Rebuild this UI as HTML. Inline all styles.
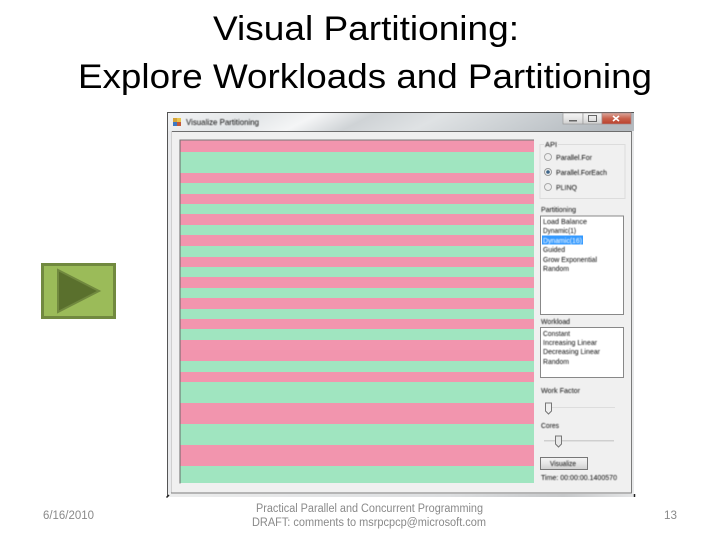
<!DOCTYPE html>
<html lang="en">
<head>
<meta charset="utf-8">
<title>Visual Partitioning</title>
<style>
html,body{margin:0;padding:0;background:#fff;width:720px;height:540px;overflow:hidden}
svg{display:block}
text{font-family:"Liberation Sans",sans-serif}
</style>
</head>
<body>
<svg width="720" height="540" viewBox="0 0 720 540" xmlns="http://www.w3.org/2000/svg">
<defs>
<linearGradient id="tb" x1="0" y1="0" x2="1" y2="0.08">
<stop offset="0" stop-color="#f3f4f5"/><stop offset=".2" stop-color="#e2e5e7"/><stop offset=".33" stop-color="#f4f5f6"/><stop offset=".45" stop-color="#cfd3d6"/><stop offset=".6" stop-color="#dfe2e4"/><stop offset=".85" stop-color="#c4c9cd"/><stop offset="1" stop-color="#b4babf"/>
</linearGradient>
<linearGradient id="btn" x1="0" y1="0" x2="0" y2="1">
<stop offset="0" stop-color="#f5f5f5"/><stop offset=".5" stop-color="#e6e6e6"/><stop offset="1" stop-color="#cfcfcf"/>
</linearGradient>
<linearGradient id="cls" x1="0" y1="0" x2="0" y2="1">
<stop offset="0" stop-color="#dba79c"/><stop offset=".5" stop-color="#c9614c"/><stop offset="1" stop-color="#b9402c"/>
</linearGradient>
<linearGradient id="bot" x1="0" y1="0" x2="1" y2="0">
<stop offset="0" stop-color="#eceded"/><stop offset=".6" stop-color="#dcdee0"/><stop offset=".85" stop-color="#c6c8ca"/><stop offset="1" stop-color="#e4e5e6"/>
</linearGradient>
<filter id="soft" x="-5%" y="-5%" width="110%" height="110%"><feGaussianBlur stdDeviation="0.45"/></filter>
</defs>
<rect width="720" height="540" fill="#fff"/>

<text x="213" y="40" font-size="34.5" fill="#000" textLength="306" lengthAdjust="spacingAndGlyphs">Visual Partitioning:</text>
<text x="78" y="88" font-size="34.5" fill="#000" textLength="574" lengthAdjust="spacingAndGlyphs">Explore Workloads and Partitioning</text>

<!-- play button -->
<rect x="42.5" y="264.5" width="72" height="53" fill="#9bbb59" stroke="#71893f" stroke-width="3"/>
<polygon points="58,270 99,291 58,312" fill="#5a702d" stroke="#71893f" stroke-width="2"/>

<!-- window -->
<rect x="167" y="112" width="467" height="385" fill="#f0f0f0"/>
<rect x="167" y="112" width="467" height="19" fill="url(#tb)"/>
<rect x="168" y="494" width="466" height="3" fill="url(#bot)"/>
<rect x="168" y="131" width="3" height="362" fill="#e9eaec"/>
<rect x="632" y="131" width="2" height="362" fill="#e8e9ea"/>
<rect x="167" y="112" width="1" height="385" fill="#555"/>
<rect x="167" y="112" width="467" height="1" fill="#555"/>
<rect x="171" y="131" width="461" height="1" fill="#6d6d6d"/>
<rect x="171" y="131" width="1" height="362" fill="#cfcfcf"/>
<rect x="171" y="492.5" width="461" height="1" fill="#7a7a7a"/>
<rect x="631" y="131" width="1" height="362" fill="#7a7a7a"/>
<path d="M166.5 497.5l2.5-2.5M634.5 497v-3" stroke="#222" stroke-width="1.5" fill="none"/>

<!-- title icon and text -->
<rect x="173" y="118" width="4" height="4" fill="#d6a33a"/>
<rect x="177" y="118" width="4" height="4" fill="#e8c64d"/>
<rect x="173" y="122" width="4" height="4" fill="#3b78c4"/>
<rect x="177" y="122" width="4" height="4" fill="#c25a3a"/>

<!-- window controls -->
<rect x="563" y="113" width="20" height="11" fill="url(#btn)" stroke="#999" stroke-width=".7"/>
<rect x="583" y="113" width="19" height="11" fill="url(#btn)" stroke="#999" stroke-width=".7"/>
<rect x="602" y="113" width="29" height="11" fill="url(#cls)" stroke="#a88" stroke-width=".7"/>
<rect x="569" y="120" width="8" height="1.5" fill="#666"/>
<rect x="588.5" y="115.5" width="8" height="6" fill="none" stroke="#666"/>
<path d="M613 116l6 5M619 116l-6 5" stroke="#fff" stroke-width="1.6" fill="none"/>

<!-- chart -->
<rect x="180" y="140" width="354" height="343" fill="#a0e5c0"/>
<g fill="#f295ae">
<rect x="180" y="140" width="354" height="12"/>
<rect x="180" y="173" width="354" height="10"/>
<rect x="180" y="194" width="354" height="10"/>
<rect x="180" y="214" width="354" height="11"/>
<rect x="180" y="235" width="354" height="11"/>
<rect x="180" y="257" width="354" height="10"/>
<rect x="180" y="277" width="354" height="11"/>
<rect x="180" y="298" width="354" height="11"/>
<rect x="180" y="319" width="354" height="10"/>
<rect x="180" y="340" width="354" height="21"/>
<rect x="180" y="372" width="354" height="10"/>
<rect x="180" y="403" width="354" height="21"/>
<rect x="180" y="445" width="354" height="21"/>
</g>
<rect x="179.5" y="139.5" width="1" height="344" fill="#666"/>
<rect x="180" y="139.5" width="354" height="1" fill="#777"/>

<!-- API group -->
<rect x="540" y="144.5" width="85" height="54" fill="#f0f0f0" stroke="#dcdcdc"/>
<rect x="544" y="140" width="14" height="9" fill="#f0f0f0"/>
<rect x="540.5" y="216" width="83" height="98.5" fill="#fff" stroke="#888"/>
<rect x="542" y="235.5" width="41" height="9" fill="#3399ff"/>
<rect x="540.5" y="327.5" width="83" height="50" fill="#fff" stroke="#888"/>
<rect x="545" y="407" width="70" height="1" fill="#ddd"/>
<path d="M545.5 403h6v8l-3 3l-3-3z" fill="#f0f0f0" stroke="#777"/>
<rect x="544" y="440" width="70" height="1.5" fill="#cfcfcf"/>
<path d="M555.5 436h6v8l-3 3l-3-3z" fill="#e8e8e8" stroke="#777"/>
<circle cx="548" cy="157" r="3.5" fill="#eee" stroke="#aaa"/>
<circle cx="548" cy="172" r="3.5" fill="#eee" stroke="#999"/>
<circle cx="548" cy="172" r="1.8" fill="#3c6488"/>
<circle cx="548" cy="187" r="3.5" fill="#eee" stroke="#aaa"/>
<rect x="540.5" y="457.5" width="47" height="12" fill="url(#btn)" stroke="#777"/>

<!-- window text, softened to match the scaled screenshot -->
<g filter="url(#soft)" fill="#111">
<text x="186" y="125" font-size="8.5" textLength="73" lengthAdjust="spacingAndGlyphs">Visualize Partitioning</text>
<text x="545" y="147" font-size="7.5">API</text>
<text x="556" y="160" font-size="7.5" textLength="36" lengthAdjust="spacingAndGlyphs">Parallel.For</text>
<text x="556" y="175" font-size="7.5" textLength="51" lengthAdjust="spacingAndGlyphs">Parallel.ForEach</text>
<text x="556" y="190" font-size="7.5" textLength="21" lengthAdjust="spacingAndGlyphs">PLINQ</text>
<text x="541" y="212" font-size="7.5" textLength="35" lengthAdjust="spacingAndGlyphs">Partitioning</text>
<g font-size="7.5">
<text x="543" y="224" textLength="44" lengthAdjust="spacingAndGlyphs">Load Balance</text>
<text x="543" y="233" textLength="33" lengthAdjust="spacingAndGlyphs">Dynamic(1)</text>
<text x="543" y="243" fill="#fff" textLength="39" lengthAdjust="spacingAndGlyphs">Dynamic(16)</text>
<text x="543" y="252" textLength="22" lengthAdjust="spacingAndGlyphs">Guided</text>
<text x="543" y="262" textLength="54" lengthAdjust="spacingAndGlyphs">Grow Exponential</text>
<text x="543" y="271" textLength="26" lengthAdjust="spacingAndGlyphs">Random</text>
</g>
<text x="541" y="324" font-size="7.5" textLength="29" lengthAdjust="spacingAndGlyphs">Workload</text>
<g font-size="7.5">
<text x="543" y="336" textLength="27" lengthAdjust="spacingAndGlyphs">Constant</text>
<text x="543" y="345" textLength="54" lengthAdjust="spacingAndGlyphs">Increasing Linear</text>
<text x="543" y="354" textLength="57" lengthAdjust="spacingAndGlyphs">Decreasing Linear</text>
<text x="543" y="364" textLength="26" lengthAdjust="spacingAndGlyphs">Random</text>
</g>
<text x="541" y="393" font-size="7.5" textLength="39" lengthAdjust="spacingAndGlyphs">Work Factor</text>
<text x="541" y="428" font-size="7.5" textLength="18" lengthAdjust="spacingAndGlyphs">Cores</text>
<text x="550" y="466" font-size="7.5" textLength="26" lengthAdjust="spacingAndGlyphs">Visualize</text>
<text x="541" y="480" font-size="7.5" textLength="76" lengthAdjust="spacingAndGlyphs">Time: 00:00:00.1400570</text>
</g>

<!-- footer -->
<text x="43" y="519" font-size="11.5" fill="#898989" textLength="51" lengthAdjust="spacingAndGlyphs">6/16/2010</text>
<text x="256" y="512" font-size="11.5" fill="#898989" textLength="227" lengthAdjust="spacingAndGlyphs">Practical Parallel and Concurrent Programming</text>
<text x="252" y="526" font-size="11.5" fill="#898989" textLength="234" lengthAdjust="spacingAndGlyphs">DRAFT: comments to msrpcpcp@microsoft.com</text>
<text x="664" y="519" font-size="11.5" fill="#898989" textLength="13" lengthAdjust="spacingAndGlyphs">13</text>
</svg>
</body>
</html>
